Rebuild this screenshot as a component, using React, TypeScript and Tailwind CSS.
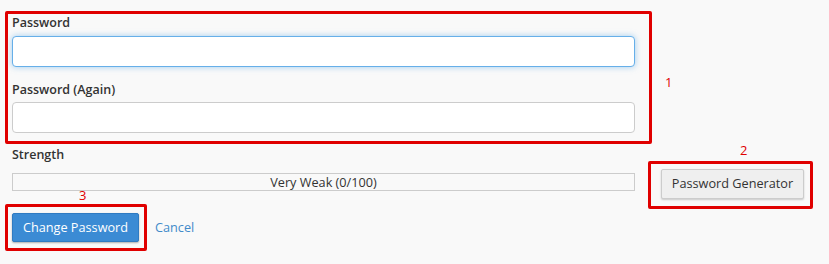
import React from "react";

const RED = "border-[#e00000]";

export default function App() {
  return (
    <div
      className="w-[829px] h-[264px] bg-[#f9f9f9] text-[#333] overflow-hidden pl-[5px] pt-[11px]"
      style={{ fontFamily: '"Open Sans", "Liberation Sans", sans-serif' }}
    >
      {/* Row 1: password fields (annotated box 1) */}
      <div className="flex items-start">
        <div className={`w-[647px] border-[3px] ${RED} rounded-[2px] pl-[4px] pr-[14px] pb-[8px]`}>
          <label className="block text-[12.5px] leading-[18px] font-semibold text-[#333]">Password</label>
          <div className="mt-[4px] h-[31px] rounded-[4px] border border-[#66afe9] bg-white shadow-[0_0_6px_rgba(102,175,233,0.6)]" />
          <label className="block mt-[14px] text-[12.5px] leading-[18px] font-semibold text-[#333]">
            Password (Again)
          </label>
          <div className="mt-[3px] h-[31px] rounded-[4px] border border-[#ccc] bg-white" />
        </div>
        <span className="ml-[13px] mt-[62px] text-[13px] leading-[18px] text-[#e00000]">1</span>
      </div>

      {/* Row 2: strength, actions, generator */}
      <div className="flex items-start">
        <div className="w-[630px] flex flex-col">
          <div className="ml-[7px] mt-[2px] text-[12.5px] leading-[18px] font-semibold text-[#333]">Strength</div>
          <div className="ml-[7px] mt-[9px] h-[18px] border border-[#ccc] bg-[#f9f9f9] flex items-center justify-center text-[12.7px] text-[#333] leading-none">
            Very Weak (0/100)
          </div>
          <span className="ml-[74px] -mt-[5px] text-[13px] leading-[18px] text-[#e00000]">3</span>
          <div className="flex items-center">
            <div className={`border-[3px] ${RED} rounded-[2px] pl-[4px] pr-[5px] py-[6px]`}>
              <button className="w-[127px] h-[29px] rounded-[2px] bg-[#3b8bd4] border border-[#2f7bc2] text-white text-[12.7px] shadow-[0_1px_2px_rgba(0,0,0,0.3)]">
                Change Password
              </button>
            </div>
            <span className="ml-[8px] text-[12.7px] text-[#428bca]">Cancel</span>
          </div>
        </div>
        <div className="ml-[13px] -mt-[3px] flex flex-col items-start">
          <span className="ml-[92px] text-[13px] leading-[18px] text-[#e00000]">2</span>
          <div className={`mt-[2px] border-[3px] ${RED} rounded-[2px] pl-[10px] pr-[6px] pt-[5px] pb-[7px]`}>
            <button className="w-[143px] h-[30px] rounded-[2px] border border-[#ccc] bg-[#efefef] text-[12.7px] text-[#333] shadow-[0_1px_2px_rgba(0,0,0,0.2)]">
              Password Generator
            </button>
          </div>
        </div>
      </div>
    </div>
  );
}
